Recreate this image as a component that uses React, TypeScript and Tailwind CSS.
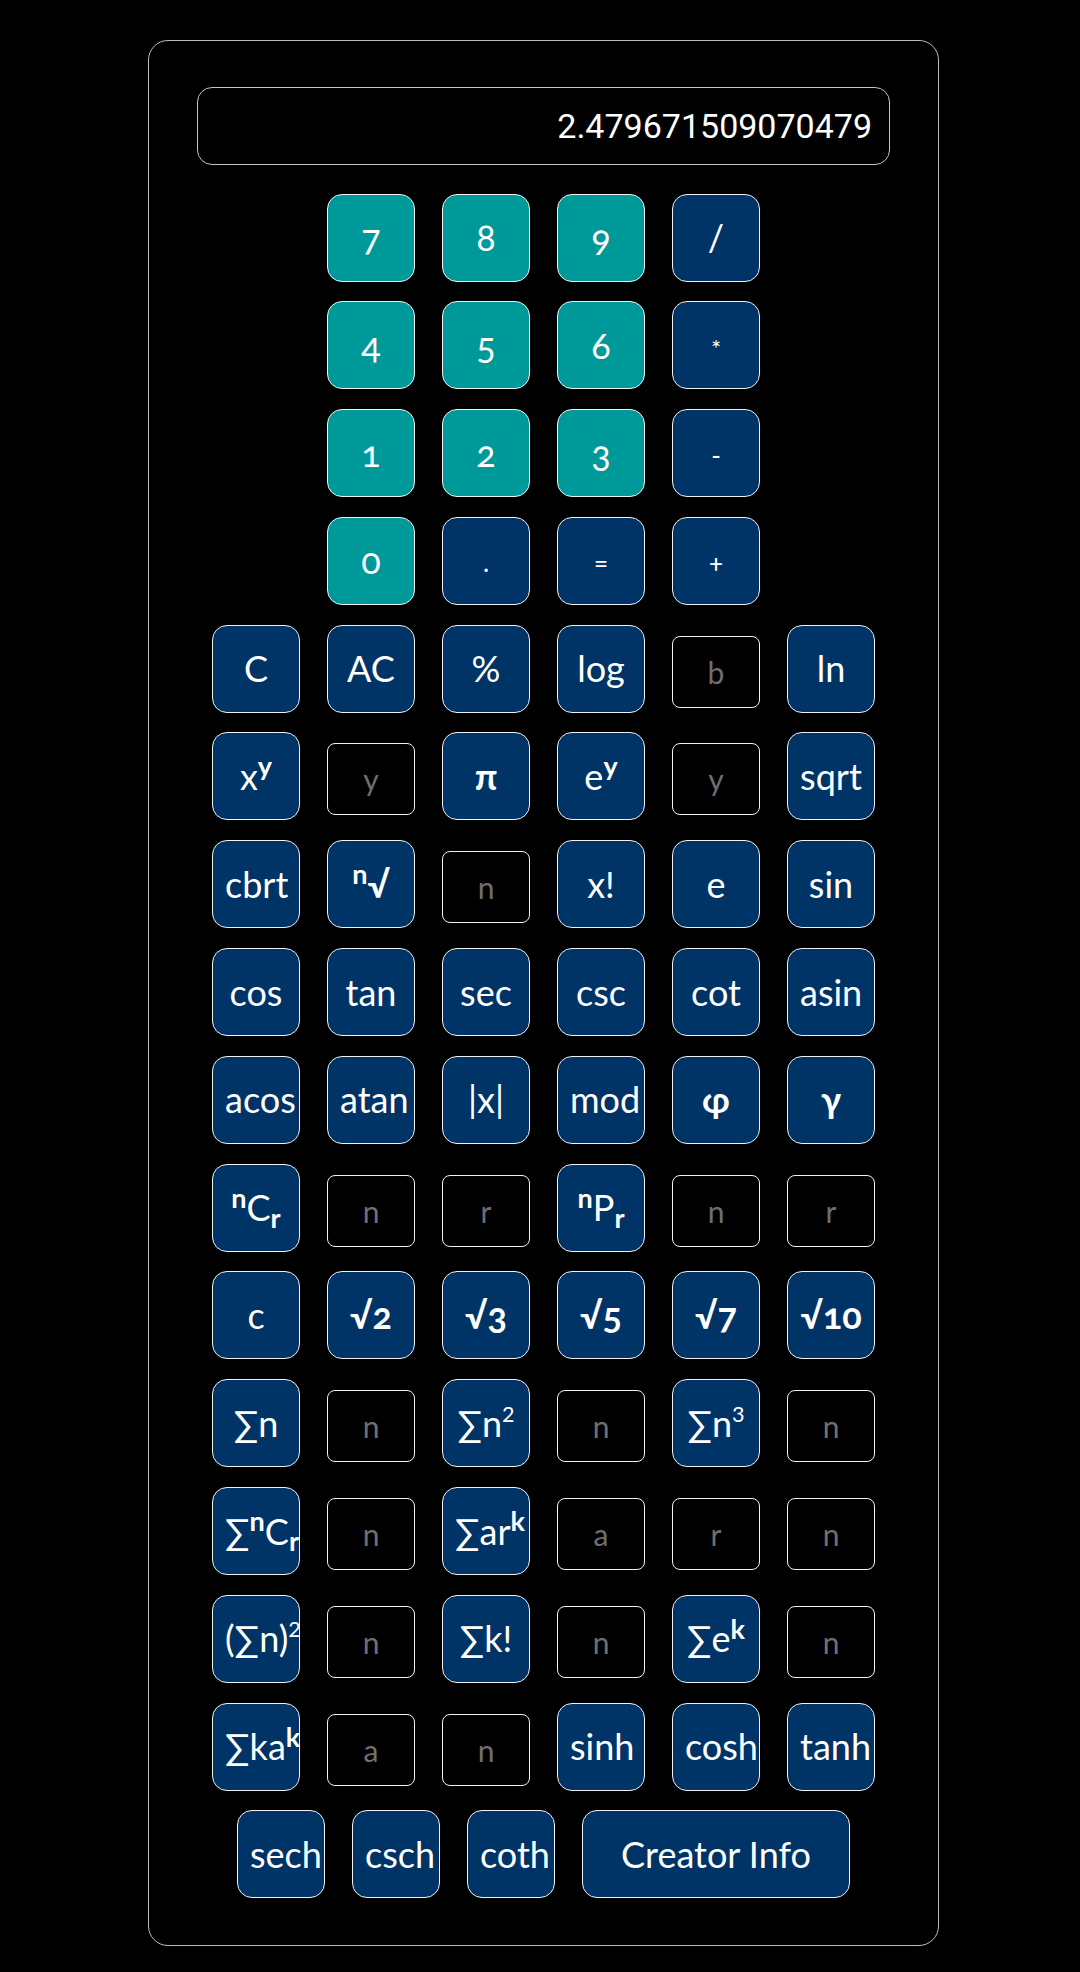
import type { ReactNode } from "react";

type KeyProps = {
  children: ReactNode;
  teal?: boolean;
  wide?: boolean;
};

const Key = ({ children, teal, wide }: KeyProps) => (
  <button
    className={`${teal ? "bg-[#009999]" : "bg-[#003366]"} ${
      wide ? "w-[268px]" : "w-[88px]"
    } h-[88px] shrink-0 rounded-[15px] border-[1.5px] border-[#f2f2f2] px-[12px] text-center text-[36px] leading-[43px] text-white whitespace-nowrap oldstyle-nums`}
  >
    {children}
  </button>
);

const Field = ({ hint }: { hint: string }) => (
  <input
    placeholder={hint}
    className="mt-[11px] h-[72px] w-[88px] shrink-0 rounded-[8px] border-[1.5px] border-[#f2f2f2] bg-black text-center text-[30px] text-white outline-none placeholder:text-[#6f6f6f]"
  />
);

const Sup = ({ children }: { children: ReactNode }) => (
  <sup className="font-bold">{children}</sup>
);

const Sub = ({ children }: { children: ReactNode }) => (
  <sub className="font-bold">{children}</sub>
);

// plain squared / cubed marks, the reference draws them a bit larger than Lato's ² ³
const Pow = ({ children }: { children: ReactNode }) => (
  <sup className="text-[0.6em] lining-nums -top-[0.7em]">{children}</sup>
);

const Row = ({ children }: { children: ReactNode }) => (
  <div className="flex items-start justify-center gap-x-[27px]">{children}</div>
);

export default function App() {
  return (
    <div className="min-h-screen bg-black pt-[40px] pl-[7px] flex justify-center [font-family:Lato,'DejaVu_Sans',sans-serif]">
      <div className="w-[791px] h-[1906px] rounded-[20px] border border-[#bdbdbd] px-[48px] pt-[46px]">
        <div className="flex h-[78px] items-center justify-end rounded-[15px] border border-[#c4c4c4] pr-[17px] text-[34px] text-white [font-family:Roboto,sans-serif]">
          2.479671509070479
        </div>

        <div className="mt-[28.5px] flex flex-col gap-y-[19.8px]">
          <Row>
            <Key teal>7</Key>
            <Key teal>8</Key>
            <Key teal>9</Key>
            <Key>/</Key>
          </Row>
          <Row>
            <Key teal>4</Key>
            <Key teal>5</Key>
            <Key teal>6</Key>
            <Key>
              <span className="text-[24px]">*</span>
            </Key>
          </Row>
          <Row>
            <Key teal>1</Key>
            <Key teal>2</Key>
            <Key teal>3</Key>
            <Key>
              <span className="text-[26px]">-</span>
            </Key>
          </Row>
          <Row>
            <Key teal>0</Key>
            <Key>
              <span className="text-[26px]">.</span>
            </Key>
            <Key>
              <span className="text-[26px]">=</span>
            </Key>
            <Key>
              <span className="text-[26px]">+</span>
            </Key>
          </Row>

          <Row>
            <Key>C</Key>
            <Key>AC</Key>
            <Key>%</Key>
            <Key>log</Key>
            <Field hint="b" />
            <Key>ln</Key>
          </Row>
          <Row>
            <Key>
              x<Sup>y</Sup>
            </Key>
            <Field hint="y" />
            <Key>
              <b>π</b>
            </Key>
            <Key>
              e<Sup>y</Sup>
            </Key>
            <Field hint="y" />
            <Key>sqrt</Key>
          </Row>
          <Row>
            <Key>cbrt</Key>
            <Key>
              <Sup>n</Sup>
              <b>√</b>
            </Key>
            <Field hint="n" />
            <Key>x!</Key>
            <Key>e</Key>
            <Key>sin</Key>
          </Row>
          <Row>
            <Key>cos</Key>
            <Key>tan</Key>
            <Key>sec</Key>
            <Key>csc</Key>
            <Key>cot</Key>
            <Key>asin</Key>
          </Row>
          <Row>
            <Key>acos</Key>
            <Key>atan</Key>
            <Key>|x|</Key>
            <Key>mod</Key>
            <Key>
              <b>φ</b>
            </Key>
            <Key>
              <b>γ</b>
            </Key>
          </Row>
          <Row>
            <Key>
              <Sup>n</Sup>C<Sub>r</Sub>
            </Key>
            <Field hint="n" />
            <Field hint="r" />
            <Key>
              <Sup>n</Sup>P<Sub>r</Sub>
            </Key>
            <Field hint="n" />
            <Field hint="r" />
          </Row>
          <Row>
            <Key>c</Key>
            <Key>
              <b>√2</b>
            </Key>
            <Key>
              <b>√3</b>
            </Key>
            <Key>
              <b>√5</b>
            </Key>
            <Key>
              <b>√7</b>
            </Key>
            <Key>
              <b>√10</b>
            </Key>
          </Row>
          <Row>
            <Key>∑n</Key>
            <Field hint="n" />
            <Key>
              ∑n<Pow>2</Pow>
            </Key>
            <Field hint="n" />
            <Key>
              ∑n<Pow>3</Pow>
            </Key>
            <Field hint="n" />
          </Row>
          <Row>
            <Key>
              ∑<Sup>n</Sup>C<Sub>r</Sub>
            </Key>
            <Field hint="n" />
            <Key>
              ∑ar<Sup>k</Sup>
            </Key>
            <Field hint="a" />
            <Field hint="r" />
            <Field hint="n" />
          </Row>
          <Row>
            <Key>
              (∑n)<Pow>2</Pow>
            </Key>
            <Field hint="n" />
            <Key>∑k!</Key>
            <Field hint="n" />
            <Key>
              ∑e<Sup>k</Sup>
            </Key>
            <Field hint="n" />
          </Row>
          <Row>
            <Key>
              ∑ka<Sup>k</Sup>
            </Key>
            <Field hint="a" />
            <Field hint="n" />
            <Key>sinh</Key>
            <Key>cosh</Key>
            <Key>tanh</Key>
          </Row>
          <Row>
            <Key>sech</Key>
            <Key>csch</Key>
            <Key>coth</Key>
            <Key wide>Creator Info</Key>
          </Row>
        </div>
      </div>
    </div>
  );
}
